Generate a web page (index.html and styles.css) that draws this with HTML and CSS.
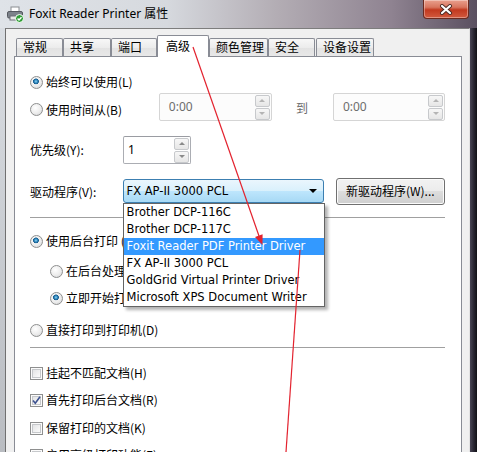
FILE: index.html
```html
<!DOCTYPE html>
<html lang="zh-CN">
<head>
  <meta charset="UTF-8" />
  <title>Foxit Reader Printer 属性</title>
  <link rel="stylesheet" href="styles.css">
</head>
<body>
  <div class="window">
    <!-- Title bar -->
    <div class="titlebar">
      <svg class="app-icon" width="17" height="17" viewBox="0 0 17 17">
        <rect x="4" y="1" width="8" height="5" fill="#fff" stroke="#8a8d92"/>
        <rect x="0.5" y="5.5" width="15" height="6.5" rx="1.5" fill="#7d838b" stroke="#55595f"/>
        <rect x="3" y="10" width="10" height="4" fill="#e8e8e8" stroke="#6a6e74"/>
        <circle cx="12.5" cy="12.5" r="4" fill="#2f9e36" stroke="#fff" stroke-width="1"/>
        <path d="M10.6 12.6 L12 14 L14.5 11.2" fill="none" stroke="#fff" stroke-width="1.4"/>
      </svg>
      <span class="title">Foxit Reader Printer 属性</span>
      <div class="close-btn">
        <svg width="14" height="11" viewBox="0 0 14 11">
          <path d="M3 2 L11 9 M11 2 L3 9" stroke="#4a2a24" stroke-width="4" stroke-linecap="round"/>
          <path d="M3 2 L11 9 M11 2 L3 9" stroke="#fff" stroke-width="2.2" stroke-linecap="round"/>
        </svg>
      </div>
    </div>

    <div class="frame">
      <div class="frame-left"></div>
      <div class="client">
        <!-- Tabs -->
        <div class="tabs">
          <div class="tab w47">常规</div>
          <div class="tab w48">共享</div>
          <div class="tab w46">端口</div>
          <div class="tab tab-active">高级</div>
          <div class="tab w59">颜色管理</div>
          <div class="tab w47 mr1">安全</div>
          <div class="tab w58">设备设置</div>
        </div>

        <!-- Advanced page -->
        <div class="panel">
          <div class="row r-always">
            <div class="opt"><span class="radio on"></span><span>始终可以使用(L)</span></div>
          </div>

          <div class="row r-time">
            <div class="opt opt-time"><span class="radio"></span><span>使用时间从(B)</span></div>
            <div class="spin disabled spin-from">
              <span class="spin-val">0:00</span>
              <div class="spin-btns"><span class="sb up"></span><span class="sb dn"></span></div>
            </div>
            <span class="to-label">到</span>
            <div class="spin disabled spin-to">
              <span class="spin-val">0:00</span>
              <div class="spin-btns"><span class="sb up"></span><span class="sb dn"></span></div>
            </div>
          </div>

          <div class="row r-prio">
            <span class="field-label">优先级(Y):</span>
            <div class="spin spin-prio">
              <span class="spin-val">1</span>
              <div class="spin-btns"><span class="sb up"></span><span class="sb dn"></span></div>
            </div>
          </div>

          <div class="row r-driver">
            <span class="field-label">驱动程序(V):</span>
            <div class="combo-wrap">
              <div class="combo">
                <span>FX AP-II 3000 PCL</span>
                <span class="combo-arrow"></span>
              </div>
              <ul class="dropdown">
                <li>Brother DCP-116C</li>
                <li>Brother DCP-117C</li>
                <li class="selected">Foxit Reader PDF Printer Driver</li>
                <li>FX AP-II 3000 PCL</li>
                <li>GoldGrid Virtual Printer Driver</li>
                <li>Microsoft XPS Document Writer</li>
              </ul>
            </div>
            <div class="button">新驱动程序(W)...</div>
          </div>

          <div class="sep sep1"></div>

          <div class="row r-spool">
            <div class="opt"><span class="radio on"></span><span>使用后台打印 (S)</span></div>
          </div>
          <div class="row r-sub1">
            <div class="opt sub"><span class="radio"></span><span>在后台处理完最后一页时开始打印(T)</span></div>
          </div>
          <div class="row r-sub2">
            <div class="opt sub"><span class="radio on"></span><span>立即开始打印(I)</span></div>
          </div>
          <div class="row r-direct">
            <div class="opt"><span class="radio"></span><span>直接打印到打印机(D)</span></div>
          </div>

          <div class="sep sep2"></div>

          <div class="row r-c1">
            <div class="opt"><span class="check"></span><span>挂起不匹配文档(H)</span></div>
          </div>
          <div class="row r-c2">
            <div class="opt">
              <span class="check">
                <svg width="11" height="11" viewBox="0 0 11 11"><path d="M2 5.5 L4.3 8.3 L9 1.8" fill="none" stroke="#3d5290" stroke-width="1.6"/></svg>
              </span>
              <span>首先打印后台文档(R)</span>
            </div>
          </div>
          <div class="row r-c3">
            <div class="opt"><span class="check"></span><span>保留打印的文档(K)</span></div>
          </div>
          <div class="row r-c4">
            <div class="opt"><span class="check"></span><span>启用高级打印功能(E)</span></div>
          </div>
        </div>
      </div>
      <div class="frame-right"></div>
    </div>

    <!-- Annotation arrows drawn over the screenshot -->
    <svg class="arrows" width="477" height="452" viewBox="0 0 477 452">
      <line x1="193" y1="47" x2="259" y2="236" stroke="#e3232f" stroke-width="1.2"/>
      <polygon points="262.5,245 262.6,234.2 255,236.9" fill="#e3232f"/>
      <line x1="300" y1="250" x2="286" y2="452" stroke="#e3232f" stroke-width="1.2"/>
    </svg>
  </div>
</body>
</html>
```

FILE: styles.css
```css
/* Page */
body {
  margin: 0;
  background: #1c1a22;
  font-family: "Noto Sans CJK SC", sans-serif;
  font-size: 12px;
  color: #000;
}
.window {
  position: relative;
  width: 477px;
  height: 452px;
  overflow: hidden;
  background: linear-gradient(to right, #dfe3e8 0%, #d6d9de 35%, #b3adb4 58%, #8f8391 82%, #5a5060 100%);
}

/* Title bar */
.titlebar {
  height: 28px;
  display: flex;
  align-items: center;
}
.app-icon {
  margin-left: 7px;
  flex: none;
}
.title {
  margin-left: 5px;
  font-family: "Noto Sans", "Noto Sans CJK SC", sans-serif;
  font-size: 12px;
  line-height: 16px;
  color: #000;
}
.close-btn {
  margin-left: auto;
  margin-right: 8px;
  align-self: flex-start;
  width: 46px;
  height: 19px;
  box-sizing: border-box;
  border: 1px solid #6b2a1f;
  border-top: none;
  border-radius: 0 0 4px 4px;
  background: linear-gradient(#e9a08e 0%, #d8765f 40%, #c2391f 55%, #d25a3e 100%);
  box-shadow: inset 0 0 0 1px rgba(255,255,255,0.35);
  display: flex;
  justify-content: center;
  align-items: center;
}

/* Frame */
.frame {
  display: flex;
  height: 424px;
}
.frame-left {
  width: 5px;
  flex: none;
  background: linear-gradient(#d9dde2, #b9bcc1);
}
.frame-right {
  width: 7px;
  flex: none;
  background: linear-gradient(to right, #4a4656, #2b2834 50%, #111015);
}
.client {
  flex: 1;
  background: #f0f0f0;
  border-left: 1px solid #707070;
  border-top: 1px solid #7d7d7d;
  border-right: 1px solid #e2e2e2;
  padding-left: 8px;
  overflow: hidden;
}

/* Tabs */
.tabs {
  display: flex;
  align-items: flex-end;
  height: 27px;
  padding-left: 2px;
}
.tab {
  box-sizing: border-box;
  height: 18px;
  border: 1px solid #898c95;
  border-bottom: none;
  background: linear-gradient(#f7f7f7, #ececec 50%, #e2e2e2 50%, #e8e8e8);
  padding-left: 6px;
  line-height: 16px;
  white-space: nowrap;
  border-radius: 2px 2px 0 0;
}
.w46 { width: 46px; }
.w47 { width: 47px; }
.w48 { width: 48px; }
.w58 { width: 58px; }
.w59 { width: 59px; }
.mr1 { margin-right: 1px; }
.tab-active {
  position: relative;
  z-index: 1;
  width: 52px;
  height: 22px;
  margin-bottom: -1px;
  padding-left: 8px;
  line-height: 19px;
  background: #fff;
}

/* Page panel */
.panel {
  width: 448px;
  height: 420px;
  box-sizing: border-box;
  border: 1px solid #898c95;
  background: #fff;
  padding: 0 16px 0 15px;
}
.row {
  display: flex;
  align-items: center;
  height: 20px;
  white-space: nowrap;
}
.opt {
  display: flex;
  align-items: center;
  gap: 3px;
  line-height: 16px;
}
.opt.sub {
  margin-left: 20px;
}
.r-always { margin-top: 15px; }
.r-time { margin-top: 1px; height: 28px; }
.r-prio { margin-top: 15px; height: 28px; }
.r-driver { margin-top: 14px; height: 27px; align-items: flex-start; }
.r-spool { margin-top: 13px; }
.r-sub1 { margin-top: 10px; }
.r-sub2 { margin-top: 7px; }
.r-direct { margin-top: 12px; }
.r-c1 { margin-top: 15px; }
.r-c2 { margin-top: 7px; }
.r-c3 { margin-top: 8px; }
.r-c4 { margin-top: 7px; }

.opt-time {
  width: 130px;
  padding-top: 5px;
}
.field-label {
  width: 93px;
  line-height: 16px;
}
.r-driver .field-label {
  margin-top: 6px;
}
.to-label {
  margin-left: 24px;
  width: 12px;
  color: #6d6d6d;
}

/* Radio and check boxes */
.radio {
  flex: none;
  width: 13px;
  height: 13px;
  box-sizing: border-box;
  border-radius: 50%;
  border: 1px solid #8e8f8f;
  background: radial-gradient(circle at 40% 35%, #ffffff 0, #ececec 55%, #cfd0d2 100%);
}
.radio.on {
  background:
    radial-gradient(circle at 45% 40%, #8fd6f2 0, #2f86bd 1.6px, #165b8c 2.6px, rgba(22,91,140,0) 3.2px),
    radial-gradient(circle at 40% 35%, #ffffff 0, #ececec 55%, #cfd0d2 100%);
}
.check {
  flex: none;
  width: 13px;
  height: 13px;
  box-sizing: border-box;
  border: 1px solid #8e8f8f;
  background: linear-gradient(135deg, #dcdddf, #f7f7f7 70%, #ffffff);
  box-shadow: inset 0 0 0 1px #fbfbfb, inset 0 0 0 2px #c6c8cb;
  display: flex;
  justify-content: center;
  align-items: center;
}

/* Spin boxes */
.spin {
  box-sizing: border-box;
  height: 28px;
  display: flex;
  align-items: center;
  justify-content: space-between;
  border: 1px solid #abadb3;
  border-top-color: #9a9ca2;
  border-radius: 2px;
  background: #fff;
  padding: 0 1px 0 4px;
}
.spin.disabled {
  border-color: #d5d5d5;
  background: #fcfcfc;
}
.spin.disabled .spin-val {
  color: #6d6d6d;
  padding-left: 5px;
}
.spin-from { width: 114px; }
.spin-to { width: 113px; margin-left: 25px; }
.spin-prio { width: 68px; }
.spin-val {
  line-height: 16px;
  font-family: "Noto Sans", sans-serif;
  font-size: 12px;
}
.spin-btns {
  display: flex;
  flex-direction: column;
  gap: 1px;
}
.sb {
  box-sizing: border-box;
  width: 15px;
  height: 12px;
  border: 1px solid #c7c9cc;
  border-radius: 2px;
  background: linear-gradient(#f7f7f7, #e6e6e6);
  display: flex;
  justify-content: center;
  align-items: center;
}
.sb::after {
  content: "";
  border-left: 3px solid transparent;
  border-right: 3px solid transparent;
}
.sb.up::after { border-bottom: 3px solid #8a8a8a; }
.sb.dn::after { border-top: 3px solid #8a8a8a; }
.spin.disabled .sb::after { border-bottom-color: #b4b4b4; border-top-color: #b4b4b4; }
.spin.disabled .sb.up::after { border-top: none; }
.spin.disabled .sb.dn::after { border-bottom: none; }

/* Combo box and its open list */
.combo-wrap {
  position: relative;
  margin-top: 1px;
}
.combo {
  box-sizing: border-box;
  width: 201px;
  height: 24px;
  border: 1px solid #3c7fb1;
  border-radius: 3px;
  background: linear-gradient(#eaf6fd 0%, #d9f0fc 50%, #bee6fd 50%, #a7d9f5 100%);
  display: flex;
  align-items: center;
  justify-content: space-between;
  padding: 0 6px 0 3px;
  font-family: "DejaVu Sans", sans-serif;
  font-size: 11.5px;
}
.combo-arrow {
  border-left: 4px solid transparent;
  border-right: 4px solid transparent;
  border-top: 4px solid #000;
}
.dropdown {
  position: absolute;
  top: 24px;
  left: 0;
  z-index: 5;
  width: 202px;
  box-sizing: border-box;
  margin: 0;
  padding: 0;
  list-style: none;
  background: #fff;
  border: 1px solid #646464;
  box-shadow: 3px 3px 3px rgba(0,0,0,0.3);
  font-family: "DejaVu Sans", sans-serif;
  font-size: 11.5px;
}
.dropdown li {
  height: 17px;
  line-height: 17px;
  padding-left: 3px;
  white-space: nowrap;
}
.dropdown li.selected {
  background: #3399ff;
  color: #fff;
}

/* Push button */
.button {
  box-sizing: border-box;
  width: 110px;
  height: 27px;
  margin-left: 12px;
  border: 1px solid #707070;
  border-radius: 3px;
  background: linear-gradient(#f2f2f2 0%, #ebebeb 50%, #dddddd 50%, #cfcfcf 100%);
  box-shadow: inset 0 0 0 1px #fbfbfb;
  text-align: center;
  line-height: 24px;
}

/* Separators */
.sep {
  height: 1px;
  background: #a0a0a0;
}
.sep1 { margin-top: 12px; }
.sep2 { margin-top: 7px; }

/* Red annotation lines */
.arrows {
  position: absolute;
  top: 0;
  left: 0;
  z-index: 10;
  pointer-events: none;
}
```
